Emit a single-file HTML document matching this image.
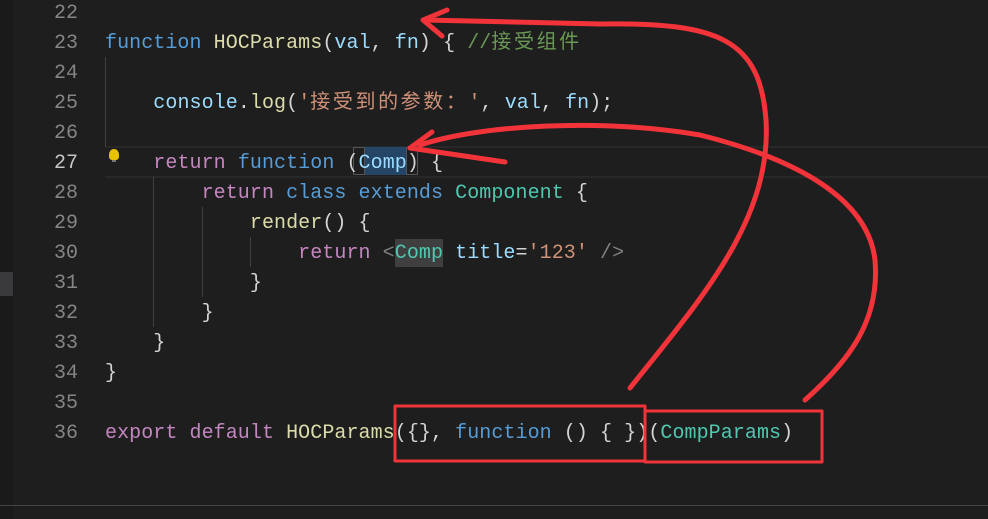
<!DOCTYPE html><html><head><style>
body{margin:0;width:988px;height:519px;background:#1e1e1e;overflow:hidden;position:relative;font-family:"Liberation Mono","Noto Sans CJK SC",monospace;font-size:20px}
.ln{position:absolute;left:0;width:78px;text-align:right;color:#858585;height:30px;line-height:30px}
.c{position:absolute;left:105px;height:30px;line-height:30px;white-space:pre;color:#d4d4d4;letter-spacing:0.07px}
.k{color:#569cd6}.p{color:#c586c0}.f{color:#dcdcaa}.v{color:#9cdcfe}.t{color:#4ec9b0}.s{color:#ce9178}.cm{color:#6a9955}.g{color:#808080}
.j{letter-spacing:2.6px}
.gd{position:absolute;width:1px;background:#404040}
</style></head><body>
<div style="position:absolute;left:0;top:0;width:13px;height:519px;background:#1a1a1a"></div>
<div style="position:absolute;left:0;top:272px;width:13px;height:24px;background:#3a3a3d"></div>
<div style="position:absolute;left:105px;top:146px;width:883px;height:28px;border-top:2px solid #282828;border-bottom:2px solid #282828"></div>
<div style="position:absolute;left:0;top:505px;width:988px;height:1px;background:#444"></div>
<div class="ln" style="top:-1px">22</div>
<div class="ln" style="top:29px">23</div>
<div class="ln" style="top:59px">24</div>
<div class="ln" style="top:89px">25</div>
<div class="ln" style="top:119px">26</div>
<div class="ln" style="top:149px;color:#c6c6c6">27</div>
<div class="ln" style="top:179px">28</div>
<div class="ln" style="top:209px">29</div>
<div class="ln" style="top:239px">30</div>
<div class="ln" style="top:269px">31</div>
<div class="ln" style="top:299px">32</div>
<div class="ln" style="top:329px">33</div>
<div class="ln" style="top:359px">34</div>
<div class="ln" style="top:389px">35</div>
<div class="ln" style="top:419px">36</div>
<div class="gd" style="left:105px;top:57px;height:90px"></div>
<div class="gd" style="left:153px;top:177px;height:150px"></div>
<div class="gd" style="left:202px;top:207px;height:90px"></div>
<div class="gd" style="left:250px;top:237px;height:30px"></div>
<div style="position:absolute;left:109px;top:149px;width:10px;height:11px;background:#e8c100;border-radius:50% 50% 30% 30%"></div>
<div style="position:absolute;left:112px;top:160px;width:4px;height:2px;background:#777"></div>
<div style="position:absolute;left:353px;top:147px;width:12px;height:28px;border:1px solid #555;box-sizing:border-box"></div>
<div style="position:absolute;left:365px;top:147px;width:41px;height:28px;background:#264f78;opacity:.8"></div>
<div style="position:absolute;left:406px;top:147px;width:12px;height:28px;border:1px solid #555;box-sizing:border-box"></div>
<div style="position:absolute;left:395px;top:239px;width:48px;height:28px;background:#3f3f3f"></div>
<div class="c" style="top:29px"><span class="k">function</span> <span class="f">HOCParams</span>(<span class="v">val</span>, <span class="v">fn</span>) { <span class="cm">//<span class="j">接受组件</span></span></div>
<div class="c" style="top:89px">    <span class="v">console</span>.<span class="f">log</span>(<span class="s">'<span class="j">接受到的参数：</span>'</span>, <span class="v">val</span>, <span class="v">fn</span>);</div>
<div class="c" style="top:149px">    <span class="p">return</span> <span class="k">function</span> (<span class="v">Comp</span>) {</div>
<div class="c" style="top:179px">        <span class="p">return</span> <span class="k">class</span> <span class="k">extends</span> <span class="t">Component</span> {</div>
<div class="c" style="top:209px">            <span class="f">render</span>() {</div>
<div class="c" style="top:239px">                <span class="p">return</span> <span class="g">&lt;</span><span class="t">Comp</span> <span class="v">title</span>=<span class="s">'123'</span> <span class="g">/&gt;</span></div>
<div class="c" style="top:269px">            }</div>
<div class="c" style="top:299px">        }</div>
<div class="c" style="top:329px">    }</div>
<div class="c" style="top:359px">}</div>
<div class="c" style="top:419px"><span class="p">export</span> <span class="p">default</span> <span class="f">HOCParams</span>({}, <span class="k">function</span> () { })(<span class="t">CompParams</span>)</div>
<svg width="988" height="519" style="position:absolute;left:0;top:0" fill="none" stroke="#f2343a" stroke-width="5" stroke-linecap="round" stroke-linejoin="round">
<path d="M630,388 C700,300 772,220 766,120 C760,40 720,22 600,24 L425,20"/>
<path d="M447,10 L423,20 L442,36"/>
<path d="M805,400 C850,360 880,320 875,260 C868,200 800,160 700,135 C600,118 480,125 420,145"/>
<path d="M432,132 L410,148 L505,162"/>
<rect x="395" y="406" width="250" height="55" stroke-width="3"/>
<rect x="645" y="411" width="177" height="51" stroke-width="3"/>
</svg>
</body></html>
